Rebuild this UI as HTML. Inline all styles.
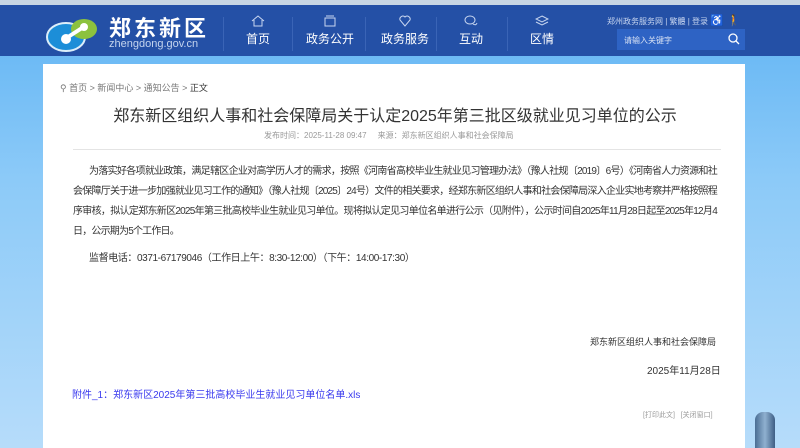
<!DOCTYPE html>
<html><head><meta charset="utf-8"><style>
*{margin:0;padding:0;box-sizing:border-box}
body{width:800px;height:448px;overflow:hidden;font-family:"Liberation Sans","Noto Sans CJK SC",sans-serif;background:linear-gradient(180deg,#5fb3f3 0%,#8ccaf8 40%,#b6dcfa 100%);position:relative}
.top{position:absolute;left:0;top:0;width:800px;height:5px;background:#c8d6e4}
.hd{position:absolute;left:0;top:5px;width:800px;height:51px;background:#2450a6;color:#fff}
.nav{position:absolute;top:0;height:51px;text-align:center;font-size:12px}
.nav .ic{display:block;margin:10px auto 3px;width:14px;height:12px}
.sep{position:absolute;top:12px;width:1px;height:34px;background:#3a64b6}
.panel{position:absolute;left:43px;top:64px;width:702px;height:384px;background:#fff}
.t{position:absolute;white-space:nowrap}
.ln{position:absolute;left:73px;width:644px;font-size:10px;line-height:14px;color:#333;white-space:nowrap;text-align:justify;text-align-last:justify;letter-spacing:-0.8px}
</style></head><body>
<div class="top"></div>
<div class="hd">
 <svg style="position:absolute;left:46px;top:10px" width="56" height="38" viewBox="0 0 56 38">
  <ellipse cx="20" cy="22" rx="19" ry="14" fill="#1c8ed8" stroke="#dceefa" stroke-width="2"/>
  <ellipse cx="38" cy="14" rx="13" ry="10" fill="#8cc23e"/>
  <circle cx="20" cy="24" r="5" fill="#fff"/><path d="M22 22 L36 13" stroke="#fff" stroke-width="4"/>
  <circle cx="38" cy="12" r="4" fill="#fff"/>
 </svg>
 <div class="t" style="left:109px;top:6px;font-size:22px;font-weight:bold;letter-spacing:3px">郑东新区</div>
 <div class="t" style="left:109px;top:33px;font-size:11px;color:#c4d4ee">zhengdong.gov.cn</div>
 <div class="sep" style="left:223px"></div>
 <div class="nav" style="left:236px;width:44px"><svg class="ic" viewBox="0 0 14 12"><path d="M1 6 L7 1 L13 6 M3 5 V11 H11 V5" fill="none" stroke="#c8d6f0"/></svg>首页</div>
 <div class="sep" style="left:292px"></div>
 <div class="nav" style="left:300px;width:60px"><svg class="ic" viewBox="0 0 14 12"><path d="M2 3 H12 V11 H2 Z M3 1 H11" fill="none" stroke="#c8d6f0"/></svg>政务公开</div>
 <div class="sep" style="left:365px"></div>
 <div class="nav" style="left:375px;width:60px"><svg class="ic" viewBox="0 0 14 12"><path d="M7 11 L2 5 A3 3 0 0 1 7 2 A3 3 0 0 1 12 5 Z" fill="none" stroke="#c8d6f0"/></svg>政务服务</div>
 <div class="sep" style="left:436px"></div>
 <div class="nav" style="left:448px;width:46px"><svg class="ic" viewBox="0 0 14 12"><ellipse cx="6" cy="5" rx="5" ry="4" fill="none" stroke="#c8d6f0"/><path d="M9 9 Q12 11 13 8" fill="none" stroke="#c8d6f0"/></svg>互动</div>
 <div class="sep" style="left:507px"></div>
 <div class="nav" style="left:520px;width:44px"><svg class="ic" viewBox="0 0 14 12"><path d="M7 1 L13 4 L7 7 L1 4 Z M1 7 L7 10 L13 7" fill="none" stroke="#c8d6f0"/></svg>区情</div>
 <div class="t" style="left:607px;top:9px;font-size:8px;color:#c8d6f0">郑州政务服务网 | 繁體 | 登录 <span style="font-size:11px;color:#fff">♿ 🚶</span></div>
 <div style="position:absolute;left:617px;top:24px;width:128px;height:21px;background:#2e63c4"></div>
 <div class="t" style="left:624px;top:30px;font-size:8px;color:#d8e2f4">请输入关键字</div>
 <svg style="position:absolute;left:728px;top:28px" width="12" height="12" viewBox="0 0 12 12"><circle cx="5" cy="5" r="4" fill="none" stroke="#fff" stroke-width="1.3"/><path d="M8 8 L11 11" stroke="#fff" stroke-width="1.3"/></svg>
</div>
<div class="panel"></div>
<div class="t" style="left:60px;top:81px;font-size:9px;color:#777">⚲ 首页 &gt; 新闻中心 &gt; 通知公告 &gt; <span style="color:#333">正文</span></div>
<div class="t" style="left:0;width:790px;text-align:center;top:102px;font-size:16px;color:#333">郑东新区组织人事和社会保障局关于认定2025年第三批区级就业见习单位的公示</div>
<div class="t" style="left:264px;top:130px;font-size:8px;color:#999">发布时间：2025-11-28 09:47 &nbsp;&nbsp;&nbsp; 来源：郑东新区组织人事和社会保障局</div>
<div style="position:absolute;left:73px;top:149px;width:648px;height:1px;background:#e4e4e4"></div>
<div class="ln" style="top:165px;left:89px;width:628px">为落实好各项就业政策，满足辖区企业对高学历人才的需求，按照《河南省高校毕业生就业见习管理办法》（豫人社规〔2019〕6号）《河南省人力资源和社</div>
<div class="ln" style="top:185px">会保障厅关于进一步加强就业见习工作的通知》（豫人社规〔2025〕24号）文件的相关要求，经郑东新区组织人事和社会保障局深入企业实地考察并严格按照程</div>
<div class="ln" style="top:205px">序审核，拟认定郑东新区2025年第三批高校毕业生就业见习单位。现将拟认定见习单位名单进行公示（见附件），公示时间自2025年11月28日起至2025年12月4</div>
<div class="ln" style="top:225px;width:auto;text-align-last:auto">日，公示期为5个工作日。</div>
<div class="ln" style="top:252px;left:89px;width:auto;text-align-last:auto;letter-spacing:-0.4px">监督电话：0371-67179046（工作日上午：8:30-12:00）（下午：14:00-17:30）</div>
<div class="t" style="left:590px;top:335px;font-size:9px;color:#333">郑东新区组织人事和社会保障局</div>
<div class="t" style="left:647px;top:362px;font-size:10px;color:#333">2025年11月28日</div>
<div class="t" style="left:72px;top:386px;font-size:10px;color:#3a3aee">附件_1：郑东新区2025年第三批高校毕业生就业见习单位名单.xls</div>
<div class="t" style="left:643px;top:410px;font-size:7px;color:#999">[打印此文] &nbsp; [关闭窗口]</div>
<div style="position:absolute;left:755px;top:412px;width:20px;height:36px;background:linear-gradient(90deg,#4a6e94,#8fb0d0,#3e5e84);border-radius:8px 8px 0 0"></div>
</body></html>
